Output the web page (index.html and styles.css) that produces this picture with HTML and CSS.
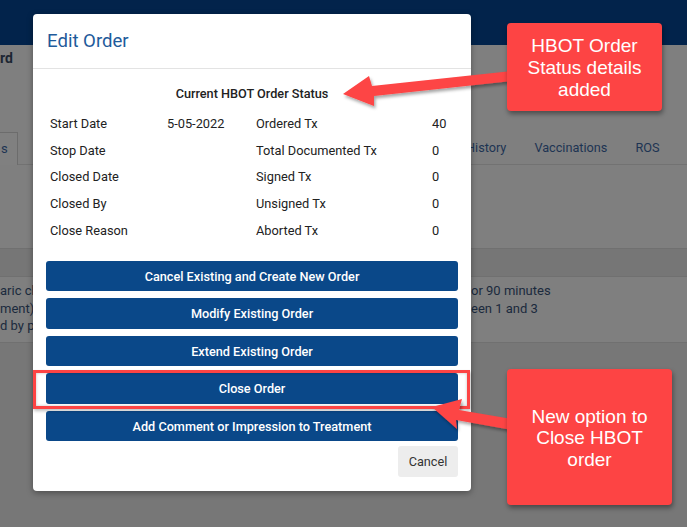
FILE: index.html
```html
<!DOCTYPE html>
<html>
<head>
<meta charset="utf-8">
<link rel="stylesheet" href="styles.css">
</head>
<body>
<div class="page">
  <div class="topbar"></div>
  <div class="pagehead"><span class="pagetitle">rd</span></div>
  <div class="tabs">
    <div class="tab tab-first">s</div>
    <div class="tabs-right">
      <span class="tabitem">History</span>
      <span class="tabitem">Vaccinations</span>
      <span class="tabitem">ROS</span>
    </div>
  </div>
  <div class="blank"></div>
  <div class="band"></div>
  <div class="textrows">
    <div class="trow"><span class="tl">aric chamber</span><span class="tr">or 90 minutes</span></div>
    <div class="trow"><span class="tl">ment), with</span><span class="tr">een 1 and 3</span></div>
    <div class="trow"><span class="tl">d by physician</span><span class="tr"></span></div>
  </div>
  <div class="lower"></div>
</div>

<div class="modal">
  <div class="modal-header"><h2 class="modal-title">Edit Order</h2></div>
  <div class="modal-body">
    <div class="status-title">Current HBOT Order Status</div>
    <div class="status-grid">
      <span>Start Date</span><span>5-05-2022</span><span>Ordered Tx</span><span>40</span>
      <span>Stop Date</span><span></span><span>Total Documented Tx</span><span>0</span>
      <span>Closed Date</span><span></span><span>Signed Tx</span><span>0</span>
      <span>Closed By</span><span></span><span>Unsigned Tx</span><span>0</span>
      <span>Close Reason</span><span></span><span>Aborted Tx</span><span>0</span>
    </div>
    <div class="actions">
      <button class="btn-primary">Cancel Existing and Create New Order</button>
      <button class="btn-primary">Modify Existing Order</button>
      <button class="btn-primary">Extend Existing Order</button>
      <button class="btn-primary">Close Order</button>
      <button class="btn-primary">Add Comment or Impression to Treatment</button>
    </div>
    <div class="footer"><button class="btn-cancel">Cancel</button></div>
  </div>
</div>

<div class="highlight"></div>

<svg class="arrows" width="687" height="527" viewBox="0 0 687 527">
  <defs>
    <filter id="sh" x="-20%" y="-50%" width="140%" height="200%">
      <feDropShadow dx="1.5" dy="2.5" stdDeviation="1.8" flood-color="#000" flood-opacity="0.35"/>
    </filter>
  </defs>
  <polygon filter="url(#sh)" fill="#fd4444" points="512,71 372,86 369,76 343,94 374,106 374,96 512,81"/>
  <polygon filter="url(#sh)" fill="#fd4444" points="432,407 462,399 459,410 512,419 512,430 456,420 457,429"/>
</svg>

<div class="callout callout-top">HBOT Order<br>Status details<br>added</div>
<div class="callout callout-bottom">New option to<br>Close HBOT<br>order</div>
</body>
</html>
```

FILE: styles.css
```css
* { box-sizing: border-box; }
html, body { margin: 0; padding: 0; }
body {
  width: 687px;
  height: 527px;
  overflow: hidden;
  background: #7f7f7f;
  font-family: Roboto, "Liberation Sans", sans-serif;
  position: relative;
}

.page { display: flex; flex-direction: column; width: 687px; height: 527px; }
.topbar { height: 45px; background: #02234b; }
.pagehead { height: 87px; padding-top: 3px; }
.pagetitle { font-size: 14px; font-weight: 700; color: #1c2633; line-height: 18px; }
.tabs {
  height: 33px;
  display: flex;
  border-bottom: 1px solid #727272;
}
.tab-first {
  width: 18px;
  border-right: 1px solid #6c6c6c;
  border-top: 1px solid #6c6c6c;
  font-size: 13px;
  color: #1d3453;
  line-height: 32px;
  padding-left: 1px;
  margin-bottom: -1px;
  background: #808080;
}
.tabs-right { margin-left: 434px; display: flex; align-items: center; }
.tabitem { font-size: 12.7px; color: #1d3453; padding: 0 14px; line-height: 32px; }
.blank { height: 83px; }
.band { height: 29px; background: #767676; border-top: 1px solid #707070; border-bottom: 1px solid #707070; }
.textrows { height: 65px; padding-top: 5px; }
.trow { display: grid; grid-template-columns: 471px 1fr; height: 17.5px; font-size: 13px; line-height: 17.5px; color: #1b2a3d; }
.tl, .tr { white-space: nowrap; overflow: hidden; }
.lower { flex: 1; background: #777777; border-top: 1px solid #707070; }

.modal {
  position: absolute;
  left: 33px;
  top: 14px;
  width: 438px;
  height: 477px;
  background: #fff;
  border-radius: 4px;
  box-shadow: 0 2px 6px rgba(0,0,0,0.35);
}
.modal-header {
  height: 55px;
  display: flex;
  align-items: center;
  padding-left: 14px;
  border-bottom: 1px solid #e3e3e3;
}
.modal-title { margin: 0; font-size: 18.6px; font-weight: 400; color: #1f5b9b; }
.modal-body { padding: 15px 13px 13px; }
.status-title { text-align: center; font-size: 12.7px; font-weight: 500; color: #222; line-height: 20px; }
.status-grid {
  margin-top: 6px;
  padding-left: 4px;
  display: grid;
  grid-template-columns: 117px 89px 176px 1fr;
  grid-auto-rows: 26.75px;
  align-items: center;
  font-size: 12.8px;
  color: #222;
}
.actions { margin-top: 17px; display: flex; flex-direction: column; gap: 7px; }
.btn-primary {
  height: 30.5px;
  border: none;
  border-radius: 3px;
  background: #0a4889;
  color: #fff;
  font-family: Roboto, "Liberation Sans", sans-serif;
  font-size: 12.7px;
  font-weight: 500;
  padding: 0;
}
.footer { display: flex; justify-content: flex-end; margin-top: 5px; }
.btn-cancel {
  width: 60px;
  height: 31px;
  border: none;
  border-radius: 3px;
  background: #ededed;
  color: #333;
  font-family: Roboto, "Liberation Sans", sans-serif;
  font-size: 12.7px;
  padding: 0;
}

.highlight {
  position: absolute;
  left: 33px;
  top: 370px;
  width: 437px;
  height: 39px;
  border: 3px solid #fd4444;
  box-shadow: inset 0 0 3px rgba(0,0,0,0.25), 1px 2px 3px rgba(0,0,0,0.25);
}

.arrows { position: absolute; left: 0; top: 0; }

.callout {
  position: absolute;
  background: #fd4444;
  color: #fff;
  border-radius: 4px;
  box-shadow: 1px 3px 5px rgba(0,0,0,0.4);
  font-family: "Liberation Sans", Arial, sans-serif;
  font-size: 19px;
  line-height: 22px;
  text-align: center;
  display: flex;
  align-items: center;
  justify-content: center;
}
.callout-top { left: 507px; top: 23px; width: 155px; height: 88px; padding-top: 1px; }
.callout-bottom { left: 507px; top: 369px; width: 165px; height: 136px; line-height: 21.5px; padding-top: 2px; }
```
